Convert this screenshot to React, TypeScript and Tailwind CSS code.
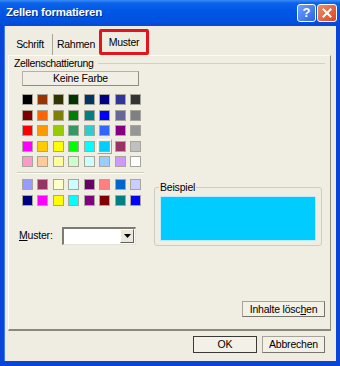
import React from "react";

const palette: string[][] = [
  ["bg-[#000000]", "bg-[#993300]", "bg-[#333300]", "bg-[#003300]", "bg-[#003366]", "bg-[#000080]", "bg-[#333399]", "bg-[#333333]"],
  ["bg-[#800000]", "bg-[#FF6600]", "bg-[#808000]", "bg-[#008000]", "bg-[#008080]", "bg-[#0000FF]", "bg-[#666699]", "bg-[#808080]"],
  ["bg-[#FF0000]", "bg-[#FF9900]", "bg-[#99CC00]", "bg-[#339966]", "bg-[#33CCCC]", "bg-[#3366FF]", "bg-[#800080]", "bg-[#969696]"],
  ["bg-[#FF00FF]", "bg-[#FFCC00]", "bg-[#FFFF00]", "bg-[#00FF00]", "bg-[#00FFFF]", "bg-[#00CCFF]", "bg-[#993366]", "bg-[#C0C0C0]"],
  ["bg-[#FF99CC]", "bg-[#FFCC99]", "bg-[#FFFF99]", "bg-[#CCFFCC]", "bg-[#CCFFFF]", "bg-[#99CCFF]", "bg-[#CC99FF]", "bg-[#FFFFFF]"],
];

const chart: string[][] = [
  ["bg-[#9999FF]", "bg-[#993366]", "bg-[#FFFFCC]", "bg-[#CCFFFF]", "bg-[#660066]", "bg-[#FF8080]", "bg-[#0066CC]", "bg-[#CCCCFF]"],
  ["bg-[#000080]", "bg-[#FF00FF]", "bg-[#FFFF00]", "bg-[#00FFFF]", "bg-[#800080]", "bg-[#800000]", "bg-[#008080]", "bg-[#0000FF]"],
];

function Swatch({ c, sel }: { c: string; sel?: boolean }) {
  return (
    <div
      className={
        "w-[15px] h-[15px] flex items-center justify-center " +
        (sel ? "border border-t-white border-l-white border-r-[#a3a195] border-b-[#a3a195]" : "")
      }
    >
      <div className={"w-[11px] h-[11px] border border-[#a8a69b] " + c} />
    </div>
  );
}

function Grid({ rows, selR, selC }: { rows: string[][]; selR?: number; selC?: number }) {
  return (
    <div className="grid grid-cols-[repeat(8,15px)] gap-x-[0.45px] gap-y-[0.5px]">
      {rows.map((r, ri) =>
        r.map((c, ci) => <Swatch key={ri + "-" + ci} c={c} sel={ri === selR && ci === selC} />)
      )}
    </div>
  );
}

export default function App() {
  return (
    <div
      className="w-[340px] h-[366px] flex flex-col bg-[#0a45d9] text-[11px] text-black leading-none"
      style={{ fontFamily: "'Liberation Sans', Arial, sans-serif" }}
    >
      {/* Title bar */}
      <div className="h-[26px] shrink-0 flex items-center justify-between pl-[6px] pr-[3px] bg-[linear-gradient(to_bottom,#3a8cf8_0%,#0b62ea_12%,#0056e5_45%,#0052df_80%,#0a47d6_100%)]">
        <span className="text-white font-bold text-[11.5px] tracking-[-0.2px] [text-shadow:1px_1px_0_#0a2e8c]">
          Zellen formatieren
        </span>
        <div className="flex gap-[1px] mt-[-1px]">
          <div className="w-[19px] h-[18px] rounded-[3px] border border-white bg-[linear-gradient(135deg,#6ea2f8,#2a63e4)] flex items-center justify-center text-white font-bold text-[13px]">
            ?
          </div>
          <div className="w-[20px] h-[18px] rounded-[3px] border border-white bg-[linear-gradient(135deg,#f08d6a,#d8461e)] flex items-center justify-center">
            <svg width="10" height="10" viewBox="0 0 10 10">
              <path d="M1.5 1.5 L8.5 8.5 M8.5 1.5 L1.5 8.5" stroke="white" strokeWidth="2" strokeLinecap="square" />
            </svg>
          </div>
        </div>
      </div>

      {/* Body */}
      <div className="flex-1 mx-[4px] mb-[5px] bg-[#efede1] flex flex-col border-l border-[#3b7cf0]">
        {/* Tabs */}
        <div className="h-[26px] mt-[3px] pl-[3px] flex items-end">
          <div className="w-[45px] h-[21px] flex items-center justify-center border-r border-[#a5a396] text-[10.5px] tracking-[-0.3px]">
            Schrift
          </div>
          <div className="w-[44px] h-[21px] flex items-center justify-center pl-[2px] text-[10.5px] tracking-[-0.3px]">
            Rahmen
          </div>
          <div className="ml-[2px] w-[50px] h-[26px] border-[3px] border-[#e3141c] rounded-[2px] flex items-center justify-center pt-[1px] text-[10.5px] tracking-[-0.3px]">
            Muster
          </div>
        </div>

        {/* Panel */}
        <div className="ml-[3px] mr-[5px] h-[276px] bg-[#f0eee3] border-l border-t border-l-white border-t-[#fbfbf6] border-r border-r-[#8f8e84] border-b-2 border-b-[#8a897e] flex flex-col">
          {/* Group header */}
          <div className="h-[14px] flex items-center pl-[5px] pr-[5px] gap-[4px]">
            <span className="tracking-[-0.35px] text-[10.5px]">Zellenschattierung</span>
            <div className="flex-1 h-[1px] bg-[#d2d0c2]" />
          </div>

          <div className="flex">
            {/* Left column */}
            <div className="ml-[8px] w-[127px] flex flex-col">
              <div className="ml-[5px] mt-[1px] w-[117px] h-[15px] border border-[#b4b2a4] border-b-[#8f8d80] border-r-[#8f8d80] bg-[#f1efe5] flex items-center justify-center text-[10.5px] tracking-[-0.2px]">
                Keine Farbe
              </div>
              <div className="ml-[3px] mt-[6px]">
                <Grid rows={palette} selR={3} selC={5} />
              </div>
              <div className="mt-[3px] h-[1px] bg-[#cfcdbf]" />
              <div className="h-[1px] bg-white" />
              <div className="ml-[3px] mt-[3px]">
                <Grid rows={chart} />
              </div>
              <div className="mt-[19px] ml-[2px] flex items-center h-[18px]">
                <span className="w-[43px] text-[10.5px] tracking-[-0.2px]">
                  <span className="underline">M</span>uster:
                </span>
                <div className="w-[74px] h-[18px] bg-white border-t-2 border-l-2 border-t-[#7d7c72] border-l-[#7d7c72] border-r border-b border-r-[#e6e4d8] border-b-[#e6e4d8] flex justify-end items-center pr-[1px]">
                  <div className="w-[14px] h-[14px] bg-[#ebe9dd] border border-t-white border-l-white border-r-[#5f5e57] border-b-[#5f5e57] flex items-center justify-center">
                    <svg width="7" height="4" viewBox="0 0 7 4">
                      <path d="M0 0 H7 L3.5 4 Z" fill="black" />
                    </svg>
                  </div>
                </div>
              </div>
            </div>

            {/* Right column */}
            <div className="ml-[10px] mt-[117px] w-[168px] h-[59px] relative border border-[#cfcdbf] rounded-[3px] pt-[8px] pl-[5px]">
              <span className="absolute left-[4px] top-[-6px] bg-[#f0eee3] px-[1px] text-[10.5px] tracking-[-0.2px]">
                Beispiel
              </span>
              <div className="w-[156px] h-[45px] bg-[#00CCFF] border border-[#bfeaf6]" />
            </div>
          </div>

          <div className="flex-1" />
          <div className="flex justify-end pr-[5px] mb-[12px]">
            <div className="w-[83px] h-[16px] border border-[#a6a498] border-r-[#767569] border-b-[#767569] bg-[#f2f0e7] flex items-center justify-center text-[10.5px] tracking-[-0.2px]">
              Inhalte lösc<span className="underline">h</span>en
            </div>
          </div>
        </div>

        {/* Bottom buttons */}
        <div className="mt-[5px] flex justify-end pr-[11px] gap-[5px]">
          <div className="w-[64px] h-[17px] border border-[#3a3a36] bg-[#f2f0e7] flex items-center justify-center text-[10.5px]">
            OK
          </div>
          <div className="w-[63px] h-[17px] border border-[#a6a498] border-r-[#767569] border-b-[#767569] bg-[#f2f0e7] flex items-center justify-center text-[10.5px] tracking-[-0.2px]">
            Abbrechen
          </div>
        </div>
      </div>
    </div>
  );
}
